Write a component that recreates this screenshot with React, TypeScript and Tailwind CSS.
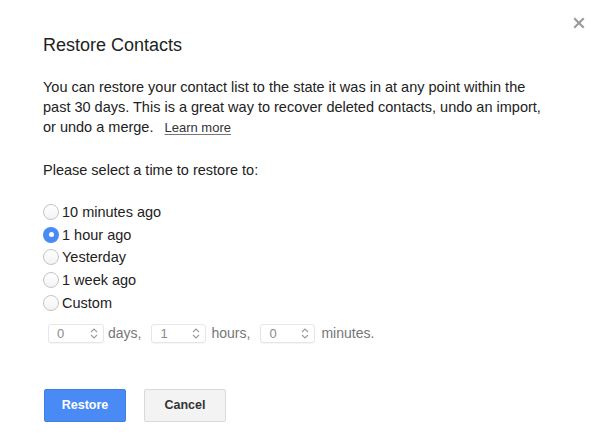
import React, { useState } from 'react';

// Opciones de tiempo para restaurar
const options = ['10 minutes ago', '1 hour ago', 'Yesterday', '1 week ago', 'Custom'];

// Pequeño icono de flechas arriba/abajo del campo numérico
function Chevrons() {
  return (
    <svg width="8" height="11" viewBox="0 0 8 11" fill="none" stroke="#9a9a9a" strokeWidth="1.1">
      <path d="M1 4 L4 1 L7 4" />
      <path d="M1 7 L4 10 L7 7" />
    </svg>
  );
}

function NumberBox({ value, width }: { value: string; width: string }) {
  return (
    <div className={`flex h-[19px] ${width} items-center justify-between rounded-[3px] border border-[#e6e6e6] bg-white pl-[8px] pr-[5px] shadow-[0_1px_1px_rgba(0,0,0,0.04)]`}>
      <span className="text-[13px] text-[#8a8a8a]">{value}</span>
      <Chevrons />
    </div>
  );
}

function Radio({ checked }: { checked: boolean }) {
  if (checked) {
    return (
      <span className="flex h-[16px] w-[16px] items-center justify-center rounded-full bg-[#4a8af4]">
        <span className="h-[5px] w-[5px] rounded-full bg-white" />
      </span>
    );
  }
  return <span className="h-[16px] w-[16px] rounded-full border border-[#c4c4c4] bg-gradient-to-b from-white to-[#f3f3f3]" />;
}

export default function App() {
  const [selected, setSelected] = useState(1);

  return (
    <div className="relative h-[448px] w-[600px] overflow-hidden bg-white font-['Liberation_Sans',Arial,sans-serif] text-[#222]">
      {/* Botón de cerrar */}
      <button className="absolute left-[572px] top-[16px] flex h-[13px] w-[13px] items-center justify-center">
        <svg width="12" height="12" viewBox="0 0 12 12" stroke="#9b9b9b" strokeWidth="2.2" strokeLinecap="square">
          <path d="M2 2 L10 10" />
          <path d="M10 2 L2 10" />
        </svg>
      </button>

      <div className="flex flex-col pl-[43px] pt-[34px]">
        <h1 className="text-[18px] leading-[22px]">Restore Contacts</h1>

        <p className="mt-[21px] w-[504px] text-[14.5px] leading-[20px]">
          You can restore your contact list to the state it was in at any point within the past 30 days. This is a great way to recover deleted contacts, undo an import, or undo a merge.{' '}
          <a className="ml-[7px] text-[13px] leading-[20px] text-[#333] underline decoration-[#777] underline-offset-2" href="#">
            Learn more
          </a>
        </p>

        <p className="mt-[22px] text-[14.5px] leading-[20px]">Please select a time to restore to:</p>

        <div className="mt-[21px] flex flex-col">
          {options.map((o, i) => (
            <label key={o} className="flex h-[22.6px] cursor-pointer items-center gap-[3px]" onClick={() => setSelected(i)}>
              <Radio checked={selected === i} />
              <span className="text-[14.5px] leading-[20px]">{o}</span>
            </label>
          ))}
        </div>

        <div className="ml-[5px] mt-[9px] flex items-center text-[14px] text-[#777]">
          <NumberBox value="0" width="w-[56px]" />
          <span className="ml-[4px]">days,</span>
          <div className="ml-[10px]">
            <NumberBox value="1" width="w-[55px]" />
          </div>
          <span className="ml-[5px]">hours,</span>
          <div className="ml-[10px]">
            <NumberBox value="0" width="w-[55px]" />
          </div>
          <span className="ml-[6px]">minutes.</span>
        </div>

        <div className="ml-[1px] mt-[45px] flex gap-[18px]">
          <button className="h-[33px] w-[82px] rounded-[2px] border border-[#3f7fe9] bg-[#4a8af4] text-[12.5px] font-bold text-white">
            Restore
          </button>
          <button className="h-[33px] w-[82px] rounded-[2px] border border-[#d9d9d9] bg-[#f3f3f3] text-[12.5px] font-bold text-[#333]">
            Cancel
          </button>
        </div>
      </div>
    </div>
  );
}
